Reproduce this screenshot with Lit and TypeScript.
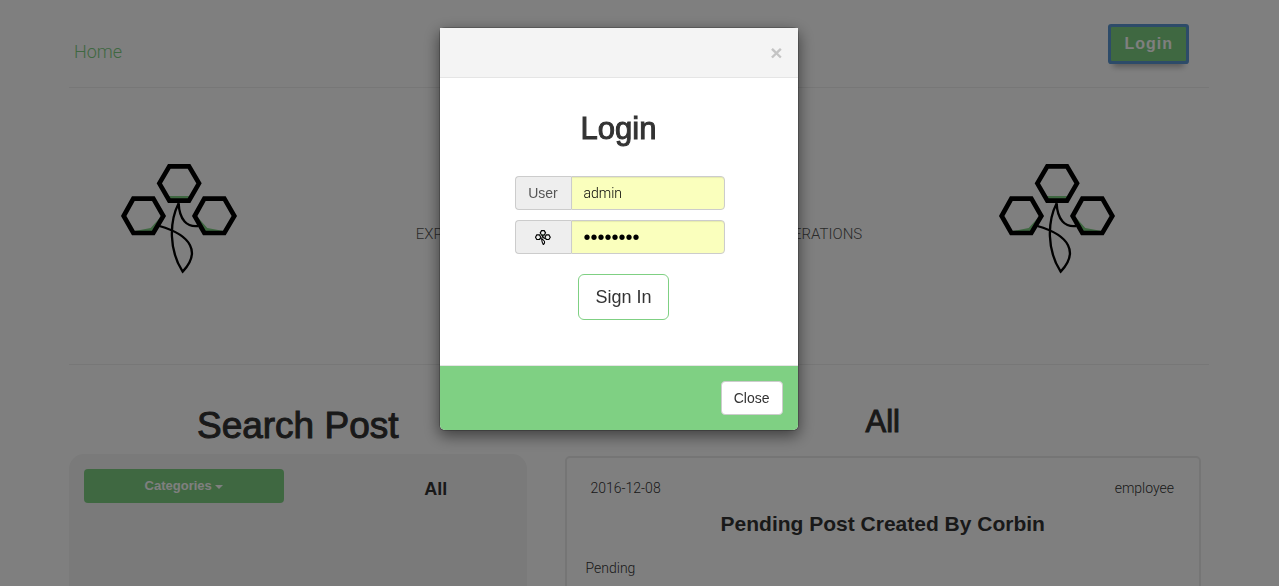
import { LitElement, html, css, svg } from "lit";
import { customElement, state } from "lit/decorators.js";

@customElement("clover-logo")
class CloverLogo extends LitElement {
  static styles = css`
    :host {
      display: block;
    }
    svg {
      display: block;
      width: 100%;
      height: 100%;
    }
    .leaf {
      fill: none;
      stroke: #000;
      stroke-width: var(--leaf-stroke, 14);
    }
    .stem {
      fill: none;
      stroke: #000;
      stroke-width: var(--stem-stroke, 7);
      stroke-linejoin: miter;
    }
    .tint {
      fill: #7fd083;
    }
  `;

  render() {
    return html`<svg viewBox="60 36 360 336" aria-hidden="true">
      ${svg`
      <polygon class="tint" points="203,138 272,138 268,152 208,152" />
      <polygon class="tint" points="104,243 152,234 180,203 160,250" />
      <polygon class="tint" points="293,202 322,234 371,243 313,250" />
      <polygon class="leaf" points="178,100 208,49 267,49 297,100 267,152 208,152" />
      <polygon class="leaf" points="71,198 100,146 160,146 190,198 160,249 100,249" />
      <polygon class="leaf" points="284,198 313,146 373,146 403,198 373,249 313,249" />
      <path class="stem" d="M236 160 C208 215 206 300 248 365 C302 308 276 256 178 228" />
      <path class="stem" d="M236 160 C238 210 262 232 294 228" />`}
    </svg>`;
  }
}

@customElement("login-dialog")
class LoginDialog extends LitElement {
  static styles = css`
    :host {
      position: fixed;
      inset: 0;
      display: flex;
      align-items: flex-start;
      justify-content: center;
      padding: 27px 42px 0 0;
      background: rgba(0, 0, 0, 0.5);
      font: 14px/20px "Liberation Sans", Arial, sans-serif;
      color: #333;
    }
    * {
      box-sizing: border-box;
    }
    .dialog {
      width: 360px;
      background: #fff;
      background-clip: padding-box;
      border: 1px solid rgba(0, 0, 0, 0.2);
      border-radius: 6px;
      box-shadow: 0 5px 15px rgba(0, 0, 0, 0.5);
    }
    .header {
      display: flex;
      align-items: center;
      justify-content: flex-end;
      height: 50px;
      padding: 0 15px;
      background: #f4f4f4;
      border-bottom: 1px solid #e5e5e5;
    }
    .dismiss {
      padding: 0;
      border: 0;
      background: none;
      font: bold 21px/21px "Liberation Sans", Arial, sans-serif;
      color: #c4c4c4;
    }
    .body {
      display: flex;
      flex-direction: column;
      align-items: center;
      padding: 34px 15px 45px;
    }
    h2 {
      margin: 0 0 30px;
      font-size: 31px;
      line-height: 34px;
      font-weight: 500;
      -webkit-text-stroke: 1px #333;
    }
    form {
      display: flex;
      flex-direction: column;
      align-items: center;
      padding-left: 2px;
    }
    .group {
      display: flex;
      width: 210px;
      height: 34px;
      margin-bottom: 10px;
    }
    .addon {
      display: flex;
      align-items: center;
      justify-content: center;
      flex: none;
      width: 56px;
      background: #eee;
      border: 1px solid #ccc;
      border-right: 0;
      border-radius: 4px 0 0 4px;
      color: #555;
    }
    .addon clover-logo {
      --leaf-stroke: 26;
      --stem-stroke: 24;
      width: 16px;
      height: 15px;
    }
    input {
      flex: 1;
      min-width: 0;
      padding: 6px 12px;
      border: 1px solid #ccc;
      border-radius: 0 4px 4px 0;
      background: #faffbd;
      box-shadow: inset 0 1px 1px rgba(0, 0, 0, 0.08);
      font: 300 14px/20px Roboto, sans-serif;
      color: #000;
    }
    input[type="password"] {
      font: 20px/20px "Liberation Sans", Arial, sans-serif;
    }
    .submit {
      margin: 10px 0 0 8px;
      padding: 10px 16px;
      border: 1px solid #7fd083;
      border-radius: 6px;
      background: #fff;
      font: 18px/24px "Liberation Sans", Arial, sans-serif;
      color: #333;
    }
    .footer {
      display: flex;
      justify-content: flex-end;
      padding: 15px;
      background: #7fd083;
      border-top: 1px solid #e5e5e5;
      border-radius: 0 0 5px 5px;
    }
    .close {
      padding: 6px 12px;
      border: 1px solid #ccc;
      border-radius: 4px;
      background: #fff;
      font: 14px/20px "Liberation Sans", Arial, sans-serif;
      color: #333;
    }
  `;

  private close() {
    this.dispatchEvent(new CustomEvent("dismiss"));
  }

  render() {
    return html`
      <div class="dialog" role="dialog" aria-labelledby="title">
        <div class="header">
          <button class="dismiss" type="button" aria-label="Close" @click=${this.close}>×</button>
        </div>
        <div class="body">
          <h2 id="title">Login</h2>
          <form @submit=${(e: Event) => e.preventDefault()}>
            <div class="group">
              <label class="addon" for="user">User</label>
              <input id="user" type="text" value="admin" />
            </div>
            <div class="group">
              <label class="addon" for="password" aria-label="Password"><clover-logo></clover-logo></label>
              <input id="password" type="password" value="password" />
            </div>
            <button class="submit" type="submit">Sign In</button>
          </form>
        </div>
        <div class="footer">
          <button class="close" type="button" @click=${this.close}>Close</button>
        </div>
      </div>
    `;
  }
}

@customElement("app-root")
class AppRoot extends LitElement {
  static styles = css`
    :host {
      display: block;
      box-sizing: border-box;
      height: 100vh;
      padding-right: 1px;
      overflow: hidden;
      background: #fff;
      font: 300 14px/20px Roboto, sans-serif;
      color: #333;
    }
    * {
      box-sizing: border-box;
    }
    .container {
      max-width: 1170px;
      margin: 0 auto;
      padding: 0 15px;
    }
    .topbar {
      display: flex;
      align-items: center;
      justify-content: space-between;
      height: 88px;
      padding: 0 23px 0 5px;
      border-bottom: 1px solid #eee;
    }
    .home {
      padding-top: 16px;
      font-size: 18px;
      line-height: 24px;
      color: #7fd083;
      text-decoration: none;
    }
    .login {
      padding: 7px 13px;
      border: 0;
      border-radius: 1px;
      background: #7fd083;
      box-shadow: 0 0 0 3px #5a96d2, 0 8px 6px -2px rgba(0, 0, 0, 0.3);
      font: bold 16px/20px "Liberation Sans", Arial, sans-serif;
      letter-spacing: 1px;
      color: #fff;
    }
    .banner {
      border-bottom: 1px solid #eee;
    }
    .row {
      display: grid;
      margin: 0 -15px;
    }
    .row > * {
      min-width: 0;
      padding: 0 15px;
    }
    .thirds {
      grid-template-columns: 3fr 6fr 3fr;
      padding: 74px 0 90px;
    }
    .content {
      grid-template-columns: 5fr 7fr;
      padding-top: 40px;
    }
    .logo {
      width: 120px;
      height: 112px;
      margin-left: 51px;
    }
    .tagline {
      margin: 62px 0 0;
      font-size: 15px;
      text-align: center;
      white-space: nowrap;
      color: #555;
    }
    h1,
    h2,
    h3,
    h4 {
      margin: 0;
      text-align: center;
      font-family: "Liberation Sans", Arial, sans-serif;
      font-weight: 500;
    }
    h1 {
      font-size: 37px;
      line-height: 42px;
      margin-bottom: 7px;
      -webkit-text-stroke: 1px #333;
    }
    .posts h2 {
      font-size: 31px;
      line-height: 34px;
      margin-bottom: 17px;
      -webkit-text-stroke: 1px #333;
    }
    .filters {
      display: grid;
      grid-template-columns: 200px 1fr;
      align-items: start;
      min-height: 300px;
      padding: 15px;
      border-radius: 15px;
      background: #f4f4f4;
    }
    .categories {
      padding: 7px 12px;
      border: 0;
      border-radius: 4px;
      background: #7fd083;
      font: bold 13px/20px "Liberation Sans", Arial, sans-serif;
      color: #fff;
    }
    .caret {
      display: inline-block;
      vertical-align: middle;
      border-top: 4px solid #fff;
      border-left: 4px solid transparent;
      border-right: 4px solid transparent;
    }
    .filters h4 {
      padding: 10px 0 0 76px;
      font-size: 18px;
      line-height: 20px;
      font-weight: bold;
    }
    .post {
      min-height: 300px;
      margin: 0 8px;
      padding: 20px 19px;
      border: 2px solid #eaeaea;
      border-radius: 5px;
    }
    .meta {
      display: flex;
      justify-content: space-between;
      padding: 0 6px 0 5px;
    }
    .post h3 {
      margin: 13px 0 21px;
      font-size: 21px;
      line-height: 26px;
      font-weight: bold;
    }
    .post p {
      margin: 0;
    }
  `;

  @state() private dialogOpen = true;

  render() {
    return html`
      <div class="container">
        <header class="topbar">
          <a class="home" href="#">Home</a>
          <button class="login" type="button" @click=${() => (this.dialogOpen = true)}>Login</button>
        </header>
        <section class="banner">
          <div class="row thirds">
            <div><clover-logo class="logo"></clover-logo></div>
            <div><p class="tagline">EXPLORING NEW CROPS AND GROWING THE NEXT GENERATIONS</p></div>
            <div><clover-logo class="logo"></clover-logo></div>
          </div>
        </section>
        <main class="row content">
          <section>
            <h1>Search Post</h1>
            <div class="filters">
              <button class="categories" type="button">Categories <span class="caret"></span></button>
              <h4>All</h4>
            </div>
          </section>
          <section class="posts">
            <h2>All</h2>
            <article class="post">
              <div class="meta"><span>2016-12-08</span><span>employee</span></div>
              <h3>Pending Post Created By Corbin</h3>
              <p>Pending</p>
            </article>
          </section>
        </main>
      </div>
      ${this.dialogOpen
        ? html`<login-dialog @dismiss=${() => (this.dialogOpen = false)}></login-dialog>`
        : null}
    `;
  }
}
